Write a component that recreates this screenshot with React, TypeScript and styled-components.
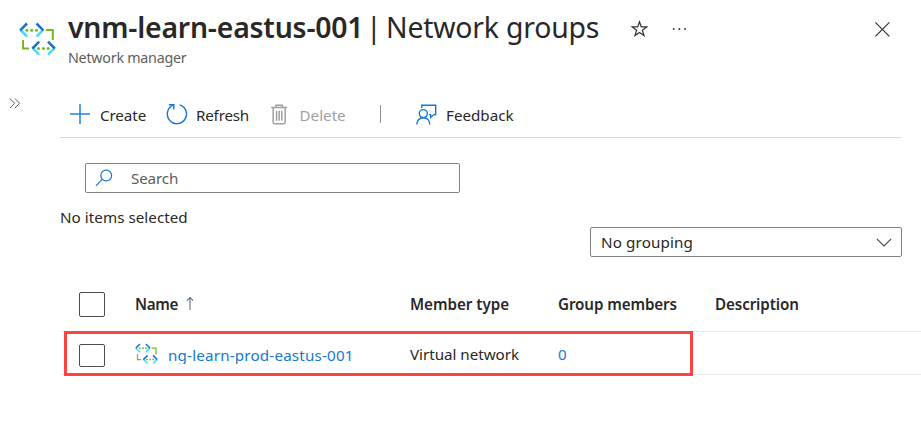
import React from "react";
import styled, { createGlobalStyle } from "styled-components";

const GlobalStyle = createGlobalStyle`
  *, *::before, *::after { box-sizing: border-box; }
  body {
    margin: 0;
    background: #fff;
    color: #292827;
    font-family: "Noto Sans", "Open Sans", sans-serif;
    font-size: 15.2px;
    line-height: 20px;
  }
  svg { display: block; flex: none; }
`;

const Page = styled.div`
  width: 921px;
  height: 435px;
  overflow: hidden;
`;

const Header = styled.header`
  display: flex;
  align-items: flex-start;
  height: 92px;
  padding-left: 19px;
`;

const ResourceIcon = styled.div`
  width: 49px;
  padding-top: 22px;
`;

const Heading = styled.div`
  width: 563px;
  padding-top: 10px;
  white-space: nowrap;
`;

const Title = styled.h1`
  display: flex;
  margin: 0;
  font-size: 28.4px;
  line-height: 34px;
  font-weight: 400;
`;

const TitleName = styled.span`
  width: 298px;
  font-weight: 600;
  letter-spacing: -0.2px;
`;

const TitleBar = styled.span`
  width: 20px;
`;

const TitleSection = styled.span`
  letter-spacing: -0.2px;
`;

const Subtitle = styled.div`
  margin-top: 4px;
  color: #605e5c;
  font-size: 14.3px;
  letter-spacing: -0.25px;
`;

const IconButton = styled.button<{ $left: number; $top: number }>`
  display: block;
  margin: ${(p) => p.$top}px 0 0 ${(p) => p.$left}px;
  padding: 0;
  border: 0;
  background: none;
  color: #323130;
`;

const Body = styled.div`
  display: flex;
`;

const Rail = styled.aside`
  width: 60px;
  flex: none;
  padding: 6px 0 0 9px;
`;

const Content = styled.main`
  flex: 1;
  min-width: 0;
`;

const Toolbar = styled.div`
  display: flex;
  align-items: center;
  width: 842px;
  height: 46px;
  padding: 0 0 1px 10px;
  border-bottom: 1px solid #dadae0;
`;

const Command = styled.button<{ $width: number; $gap: number; $spacing: number; $muted?: boolean }>`
  display: flex;
  align-items: center;
  gap: ${(p) => p.$gap}px;
  width: ${(p) => p.$width}px;
  padding: 0;
  border: 0;
  background: none;
  font: inherit;
  text-align: left;
  color: ${(p) => (p.$muted ? "#a19f9d" : "#292827")};
  letter-spacing: ${(p) => p.$spacing}px;
`;

const CommandLabel = styled.span`
  padding-top: 2px;
`;

const Divider = styled.span`
  width: 1px;
  height: 18px;
  margin: 0 35px 0 0;
  background: #8f8f98;
`;

const SearchBox = styled.label`
  display: flex;
  align-items: center;
  width: 375px;
  height: 30px;
  margin: 25px 0 0 25px;
  padding-left: 9px;
  gap: 18px;
  border: 1px solid #84827f;
  border-radius: 2px;
`;

const SearchInput = styled.input`
  width: 300px;
  padding: 0;
  border: 0;
  outline: 0;
  font: inherit;
  letter-spacing: -0.15px;
  &::placeholder { color: #605e5c; opacity: 1; }
`;

const Status = styled.div`
  height: 20px;
  margin-top: 14px;
  letter-spacing: 0.04px;
`;

const Dropdown = styled.div`
  display: flex;
  align-items: center;
  justify-content: space-between;
  width: 312px;
  height: 30px;
  margin-left: 530px;
  padding: 0 9px 0 10px;
  border: 1px solid #84827f;
  border-radius: 2px;
  letter-spacing: 0.13px;
`;

const Table = styled.div`
  margin-top: 20px;
`;

const Row = styled.div<{ $height: number; $offset?: number }>`
  position: relative;
  display: grid;
  grid-template-columns: 56px 275px 148px 157px 1fr;
  align-items: center;
  height: ${(p) => p.$height}px;
  padding: ${(p) => p.$offset ?? 0}px 0 0 19px;
  border-bottom: 1px solid #ebebeb;
`;

const Checkbox = styled.span<{ $height: number }>`
  width: 26px;
  height: ${(p) => p.$height}px;
  border: 1px solid #4f4d4b;
  border-radius: 2px;
`;

const HeadCell = styled.div<{ $spacing: number }>`
  display: flex;
  align-items: center;
  gap: 8px;
  font-weight: 600;
  letter-spacing: ${(p) => p.$spacing}px;
`;

const Cell = styled.div`
  padding-bottom: 2px;
  letter-spacing: -0.03px;
`;

const NameCell = styled.div`
  display: flex;
  align-items: center;
  gap: 10px;
`;

const RowIcon = styled.span`
  padding-bottom: 3px;
`;

const Link = styled.a`
  color: #1678cf;
`;

const NameLink = styled(Link)`
  height: 18px;
  line-height: 18px;
  overflow: hidden;
  letter-spacing: 0.18px;
`;

const Highlight = styled.div`
  position: absolute;
  left: 4px;
  top: -1px;
  width: 629px;
  height: 45px;
  border: 3px solid #fc4343;
`;

const NetworkIcon = ({ width, height }: { width: number; height: number }) => (
  <svg width={width} height={height} viewBox="0 0 37 35" fill="none" strokeWidth="2.5">
    <g stroke="#76b82a" strokeWidth="2">
      <path d="M27 8h6.8v10" />
      <path d="M4 18v8.5h6" />
    </g>
    <g stroke="#4bdcfb">
      <path d="M1.5 8 8 14.5M24 8l-6.5 6.5M13.7 26.2l6.5 6.5M35.5 26.2 29 32.7" />
    </g>
    <g stroke="#1474d0">
      <path d="M8 1.5 1.2 8.3M17.5 1.5l6.8 6.8M20.2 19.7l-6.8 6.8M29 19.7l6.8 6.8" />
    </g>
    <g fill="#76b82a">
      <circle cx="7.9" cy="8.3" r="1.5" />
      <circle cx="12.7" cy="8.3" r="1.5" />
      <circle cx="17.5" cy="8.3" r="1.5" />
      <circle cx="19.5" cy="26.4" r="1.5" />
      <circle cx="24.4" cy="26.4" r="1.5" />
      <circle cx="29.2" cy="26.4" r="1.5" />
    </g>
  </svg>
);

const StarIcon = () => (
  <svg width="18" height="18" viewBox="0 0 18 18" fill="none" stroke="currentColor" strokeWidth="1.2">
    <path d="m9.5 1.8 1.8 5.1h5.5l-4.4 3.3 1.6 5.4-4.5-3.2L5 15.6l1.6-5.4-4.4-3.3h5.5z" />
  </svg>
);

const MoreIcon = () => (
  <svg width="16" height="4" viewBox="0 0 16 4" fill="currentColor">
    <circle cx="1.7" cy="2" r="0.9" />
    <circle cx="7.4" cy="2" r="0.9" />
    <circle cx="13" cy="2" r="0.9" />
  </svg>
);

const CloseIcon = () => (
  <svg width="16" height="16" viewBox="0 0 16 16" fill="none" stroke="currentColor" strokeWidth="1.15">
    <path d="m.4 1.4 14 14M14.4 1.4l-14 14" />
  </svg>
);

const ExpandIcon = () => (
  <svg width="12" height="11" viewBox="0 0 12 11" fill="none" stroke="#605e5c" strokeWidth="1">
    <path d="M1 .6 5.6 5.3 1 10M6 .6l4.6 4.7L6 10" />
  </svg>
);

const PlusIcon = () => (
  <svg width="20" height="20" viewBox="0 0 20 20" stroke="#2383d5" strokeWidth="1.5">
    <path d="M10 0v20M0 10h20" />
  </svg>
);

const RefreshIcon = () => (
  <svg width="22" height="22" viewBox="0 0 22 22" fill="none" stroke="#0f78d4" strokeWidth="1.4">
    <path d="M13.6 1.8a9.6 9.6 0 1 1-6.5.4" />
    <path d="M2.9 1.7h4.9v4.9" />
  </svg>
);

const DeleteIcon = () => (
  <svg width="18" height="21" viewBox="0 0 18 21" fill="none" stroke="#a19f9d" strokeWidth="1.5">
    <path d="M.2 3.6h16M5 3.4V1.2h6.4v2.2M2.2 3.8v14.4q0 1.6 1.6 1.6h8.8q1.6 0 1.6-1.6V3.8" />
    <path d="M5.6 6.7v10M8.2 6.7v10M10.8 6.7v10" />
  </svg>
);

const FeedbackIcon = () => (
  <svg width="21" height="21" viewBox="0 0 21 21" fill="none" stroke="#0f78d4" strokeWidth="1.4">
    <path d="M5.8 4V1.2h13.9v9.4h-1.9l-3.2 2.9v-2.9h-1.3" />
    <circle cx="7.3" cy="9.6" r="4" />
    <path d="M.8 20.5c0-4.2 2.9-6.8 6.5-6.8s6.5 2.6 6.5 6.8" />
  </svg>
);

const SearchIcon = () => (
  <svg width="18" height="18" viewBox="0 0 18 18" fill="none" stroke="#1678cf" strokeWidth="1.2">
    <circle cx="11.2" cy="6.5" r="5.4" />
    <path d="M7.3 10.4.9 16.8" />
  </svg>
);

const ChevronIcon = () => (
  <svg width="16" height="9" viewBox="0 0 16 9" fill="none" stroke="#484644" strokeWidth="1.1">
    <path d="m.8.8 7.2 7.2L15.2.8" />
  </svg>
);

const SortIcon = () => (
  <svg width="8" height="14" viewBox="0 0 8 14" fill="none" stroke="#5c6f8a" strokeWidth="1.1">
    <path d="M4 13V.5M.9 3.7 4 .5l3.1 3.2" />
  </svg>
);

export default function App() {
  return (
    <Page>
      <GlobalStyle />
      <Header>
        <ResourceIcon>
          <NetworkIcon width={37} height={35} />
        </ResourceIcon>
        <Heading>
          <Title>
            <TitleName>vnm-learn-eastus-001</TitleName>
            <TitleBar>|</TitleBar>
            <TitleSection>Network groups</TitleSection>
          </Title>
          <Subtitle>Network manager</Subtitle>
        </Heading>
        <IconButton $left={-1} $top={20} aria-label="Favorite"><StarIcon /></IconButton>
        <IconButton $left={24} $top={27} aria-label="More"><MoreIcon /></IconButton>
        <IconButton $left={187} $top={21} aria-label="Close"><CloseIcon /></IconButton>
      </Header>
      <Body>
        <Rail><ExpandIcon /></Rail>
        <Content>
          <Toolbar>
            <Command $width={96} $gap={10} $spacing={-0.1}>
              <PlusIcon /><CommandLabel>Create</CommandLabel>
            </Command>
            <Command $width={105} $gap={8} $spacing={-0.2}>
              <RefreshIcon /><CommandLabel>Refresh</CommandLabel>
            </Command>
            <Command $width={109} $gap={10.5} $spacing={0} $muted>
              <DeleteIcon /><CommandLabel>Delete</CommandLabel>
            </Command>
            <Divider />
            <Command $width={110} $gap={9} $spacing={0}>
              <FeedbackIcon /><CommandLabel>Feedback</CommandLabel>
            </Command>
          </Toolbar>
          <SearchBox>
            <SearchIcon />
            <SearchInput placeholder="Search" />
          </SearchBox>
          <Status>No items selected</Status>
          <Dropdown>
            No grouping
            <ChevronIcon />
          </Dropdown>
          <Table>
            <Row $height={55}>
              <Checkbox $height={25} />
              <HeadCell $spacing={-0.3}>Name <SortIcon /></HeadCell>
              <HeadCell $spacing={-0.03}>Member type</HeadCell>
              <HeadCell $spacing={-0.11}>Group members</HeadCell>
              <HeadCell $spacing={-0.12}>Description</HeadCell>
            </Row>
            <Row $height={43} $offset={4}>
              <Checkbox $height={23} />
              <NameCell>
                <RowIcon><NetworkIcon width={23} height={22} /></RowIcon>
                <NameLink>ng-learn-prod-eastus-001</NameLink>
              </NameCell>
              <Cell>Virtual network</Cell>
              <Cell><Link>0</Link></Cell>
              <Cell />
              <Highlight />
            </Row>
          </Table>
        </Content>
      </Body>
    </Page>
  );
}
